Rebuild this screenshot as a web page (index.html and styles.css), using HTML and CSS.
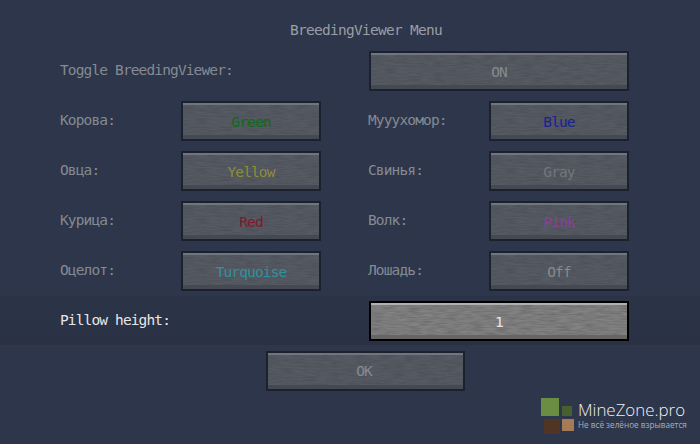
FILE: index.html
```html
<!DOCTYPE html>
<html lang="en">
<head>
    <meta charset="UTF-8">
    <title>BreedingViewer Menu</title>
    <link rel="stylesheet" href="styles.css">
</head>
<body>
    <div class="menu">
        <h1 class="menu-title">BreedingViewer Menu</h1>
        <div class="options">
            <label class="opt-label span-2">Toggle BreedingViewer:</label>
            <div class="gap-col"></div>
            <button class="btn span-2 c-dim">ON</button>

            <label class="opt-label">Корова:</label>
            <button class="btn c-green">Green</button>
            <div class="gap-col"></div>
            <label class="opt-label opt-right">Мууухомор:</label>
            <button class="btn c-blue">Blue</button>

            <label class="opt-label">Овца:</label>
            <button class="btn c-yellow">Yellow</button>
            <div class="gap-col"></div>
            <label class="opt-label opt-right">Свинья:</label>
            <button class="btn c-gray">Gray</button>

            <label class="opt-label">Курица:</label>
            <button class="btn c-red">Red</button>
            <div class="gap-col"></div>
            <label class="opt-label opt-right">Волк:</label>
            <button class="btn c-pink">Pink</button>

            <label class="opt-label">Оцелот:</label>
            <button class="btn c-turquoise">Turquoise</button>
            <div class="gap-col"></div>
            <label class="opt-label opt-right">Лошадь:</label>
            <button class="btn c-dim">Off</button>

            <label class="opt-label span-2 label-active">Pillow height:</label>
            <div class="gap-col"></div>
            <button class="btn span-2 btn-active">1</button>
        </div>
        <div class="footer">
            <button class="btn btn-ok c-dim">OK</button>
        </div>
    </div>

    <div class="logo">
        <svg class="logo-mark" width="34" height="36" viewBox="0 0 34 36">
            <rect x="0" y="0" width="18" height="18" fill="#6b8c43"/>
            <rect x="21" y="8" width="10" height="10" fill="#48602f"/>
            <rect x="3" y="21" width="16" height="15" fill="#503524"/>
            <rect x="21" y="21" width="12" height="12" fill="#a57a54"/>
        </svg>
        <div class="logo-text">
            <div class="logo-name">MineZone.pro</div>
            <div class="logo-tag">Не всё зелёное взрывается</div>
        </div>
    </div>
</body>
</html>
```

FILE: styles.css
```css
html, body{
    margin: 0;
    height: 100%;
}
body{
    width: 700px;
    height: 444px;
    overflow: hidden;
    position: relative;
    background-color: #2d364a;
    background-image: linear-gradient(#2d364a 296px, #2b3447 296px, #2a3144 345px, #2d364a 345px);
    font-family: "DejaVu Sans Mono", "Liberation Mono", monospace;
    font-size: 14.5px;
    letter-spacing: -0.87px;
}

.menu{
    padding-top: 20px;
    padding-left: 60px;
}
.menu-title{
    margin: 0;
    padding-left: 230px;
    height: 31px;
    line-height: 20px;
    font-size: 14.5px;
    font-weight: normal;
    letter-spacing: -0.73px;
    color: #9a9ea6;
}

.options{
    display: grid;
    grid-template-columns: 121px 140px 48px 120px 140px;
    grid-auto-rows: 40px;
    row-gap: 10px;
}
.span-2{
    grid-column: span 2;
}
.opt-label{
    align-self: center;
    padding-bottom: 3px;
    color: #858a93;
}
.opt-right{
    margin-left: -1px;
}
.label-active{
    color: #e6e6e6;
}

.btn{
    box-sizing: border-box;
    display: block;
    width: 100%;
    height: 40px;
    padding: 2px 0 0;
    border: 2px solid #1b212e;
    font: inherit;
    letter-spacing: inherit;
    text-align: center;
    background-color: #565a63;
    background-image:
        linear-gradient(#71757e, #71757e),
        linear-gradient(#454952, #454952),
        url("data:image/svg+xml,%3Csvg xmlns='http://www.w3.org/2000/svg' width='300' height='40'%3E%3Cfilter id='n'%3E%3CfeTurbulence type='fractalNoise' baseFrequency='0.08 0.7' numOctaves='2' seed='4'/%3E%3CfeColorMatrix values='0 0 0 0 0 0 0 0 0 0 0 0 0 0 0 0 0 0 0.22 -0.07'/%3E%3C/filter%3E%3Crect width='300' height='40' filter='url(%23n)'/%3E%3C/svg%3E");
    background-size: 100% 2px, 100% 4px, auto;
    background-position: top, bottom, 0 0;
    background-repeat: no-repeat, no-repeat, repeat;
}
.btn-active{
    border-color: #000000;
    color: #e8e8e8;
    background-color: #828282;
    background-image:
        linear-gradient(#b0b0b0, #b0b0b0),
        linear-gradient(#666666, #666666),
        url("data:image/svg+xml,%3Csvg xmlns='http://www.w3.org/2000/svg' width='300' height='40'%3E%3Cfilter id='n'%3E%3CfeTurbulence type='fractalNoise' baseFrequency='0.08 0.7' numOctaves='2' seed='9'/%3E%3CfeColorMatrix values='0 0 0 0 0 0 0 0 0 0 0 0 0 0 0 0 0 0 0.3 -0.09'/%3E%3C/filter%3E%3Crect width='300' height='40' filter='url(%23n)'/%3E%3C/svg%3E");
}

.c-dim{ color: #878a91; }
.c-gray{ color: #73767d; }
.c-green{ color: #0d6b1a; }
.c-blue{ color: #1a2390; }
.c-yellow{ color: #8c8e38; }
.c-red{ color: #7f1a2a; }
.c-pink{ color: #8d3f96; }
.c-turquoise{ color: #30929f; }

.footer{
    display: flex;
    padding-top: 10px;
    padding-left: 206px;
}
.btn-ok{
    width: 199px;
    padding: 0 3px 0 0;
}

.logo{
    position: absolute;
    left: 541px;
    top: 398px;
    display: flex;
    gap: 3px;
    letter-spacing: normal;
}
.logo-mark{
    flex: none;
}
.logo-name{
    height: 20px;
    margin-top: 2px;
    line-height: 20px;
    font-family: "Open Sans", sans-serif;
    font-size: 16.9px;
    font-weight: 300;
    color: #f0f2f5;
}
.logo-tag{
    font-family: "Open Sans", sans-serif;
    font-size: 8.2px;
    line-height: 9px;
    color: #a9aeb8;
}
```
